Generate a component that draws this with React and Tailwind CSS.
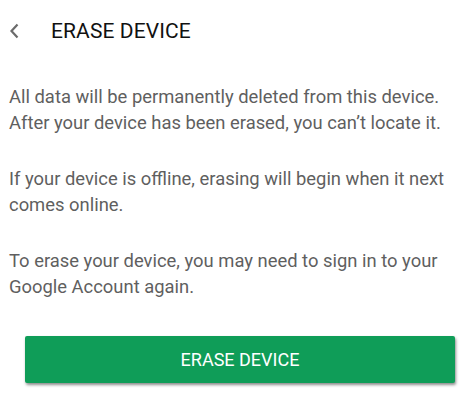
export default function App() {
  return (
    <div className="w-[474px] h-[407px] bg-white overflow-hidden" style={{ fontFamily: "Roboto, 'Noto Sans', sans-serif" }}>
      <div className="flex items-center h-[62px] pl-[9px]">
        <svg width="10" height="16" viewBox="0 0 10 16" className="shrink-0">
          <path d="M8.5 1.5 L2.5 8 L8.5 14.5" fill="none" stroke="#6b6b6b" strokeWidth="2.2" />
        </svg>
        <div className="ml-[32px] text-[21px] text-[#111] leading-none tracking-[0.1px]">ERASE DEVICE</div>
      </div>
      <div className="pl-[9px] w-[450px] pt-[22px] text-[18.4px] leading-[25.5px] text-[#5f5f5f]">
        <p>All data will be permanently deleted from this device. After your device has been erased, you can’t locate it.</p>
        <p className="mt-[31px]">If your device is offline, erasing will begin when it next comes online.</p>
        <p className="mt-[31px]">To erase your device, you may need to sign in to your Google Account again.</p>
      </div>
      <div className="px-[25px] mt-[37px]">
        <button className="w-[430px] h-[47px] bg-[#0f9d58] rounded-[2px] text-white text-[18px] shadow-[1px_2px_3px_rgba(0,0,0,0.45)] flex items-center justify-center">
          ERASE DEVICE
        </button>
      </div>
    </div>
  );
}
